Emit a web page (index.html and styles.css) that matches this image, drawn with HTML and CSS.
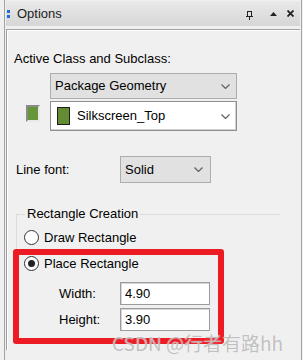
FILE: index.html
```html
<!DOCTYPE html>
<html lang="en">
<head>
    <meta charset="UTF-8">
    <title>Options</title>
    <link rel="stylesheet" href="styles.css">
</head>
<body>
    <div class="dock">
        <div class="titlebar">
            <span class="grip"><i></i><i></i></span>
            <span class="title">Options</span>
            <span class="tools">
                <svg class="pin" width="7" height="9" viewBox="0 0 7 9"><rect x="1.5" y="0.5" width="4" height="5" fill="none" stroke="#222"/><line x1="0" y1="5.5" x2="7" y2="5.5" stroke="#222"/><line x1="3.5" y1="6" x2="3.5" y2="9" stroke="#222"/></svg>
                <svg class="up" width="7" height="4" viewBox="0 0 7 4"><polygon points="0,4 3.5,0 7,4" fill="#222"/></svg>
                <svg class="close" width="7" height="7" viewBox="0 0 7 7"><path d="M0.5 0.5 L6.5 6.5 M6.5 0.5 L0.5 6.5" stroke="#222" stroke-width="1.8"/></svg>
            </span>
        </div>

        <div class="content">
            <div class="active-label">Active Class and Subclass:</div>

            <div class="class-grid">
                <span></span>
                <div class="combo flat tall">
                    <span class="combo-text">Package Geometry</span>
                    <svg class="chev" width="9" height="5" viewBox="0 0 9 5"><polyline points="0.5,0.5 4.5,4.5 8.5,0.5" fill="none" stroke="#606060" stroke-width="1.2"/></svg>
                </div>
                <span class="swatch-btn"></span>
                <div class="combo edit">
                    <span class="swatch"></span>
                    <span class="combo-text">Silkscreen_Top</span>
                    <svg class="chev" width="9" height="5" viewBox="0 0 9 5"><polyline points="0.5,0.5 4.5,4.5 8.5,0.5" fill="none" stroke="#606060" stroke-width="1.2"/></svg>
                </div>
            </div>

            <div class="font-row">
                <label>Line font:</label>
                <div class="combo flat small">
                    <span class="combo-text">Solid</span>
                    <svg class="chev" width="9" height="5" viewBox="0 0 9 5"><polyline points="0.5,0.5 4.5,4.5 8.5,0.5" fill="none" stroke="#606060" stroke-width="1.2"/></svg>
                </div>
            </div>

            <fieldset class="group">
                <legend>Rectangle Creation</legend>
                <div class="radio"><span class="dot"></span>Draw Rectangle</div>
                <div class="marked">
                    <div class="radio"><span class="dot checked"></span>Place Rectangle</div>
                    <div class="fields">
                        <label>Width:</label>
                        <div class="input">4.90</div>
                        <label>Height:</label>
                        <div class="input">3.90</div>
                    </div>
                </div>
            </fieldset>
        </div>

        <div class="watermark">CSDN @行者有路hh</div>
    </div>
</body>
</html>
```

FILE: styles.css
```css
body {
    margin: 0;
    background: #f0f0f0;
    font-family: "Liberation Sans", Arial, sans-serif;
    font-size: 13px;
    color: #000;
}
.dock {
    position: relative;
    margin-left: 4px;
    width: 298px;
    height: 360px;
    box-sizing: border-box;
    border-left: 1px solid #a3a3a3;
    border-right: 1px solid #a3a3a3;
    overflow: hidden;
}
.titlebar {
    display: flex;
    align-items: center;
    height: 25px;
    margin: 1px 1px 0;
    padding: 0 6px 0 1px;
    background: linear-gradient(#e9e9e9, #d6d6d6);
}
.grip {
    display: flex;
    flex-direction: column;
    gap: 2px;
    margin-right: 7px;
}
.grip i {
    display: block;
    width: 3px;
    height: 3px;
    background: #1d6fdc;
}
.title {
    color: #1c1c1c;
}
.tools {
    display: flex;
    align-items: center;
    margin-left: auto;
}
.pin {
    margin-right: 17px;
    margin-top: 3px;
}
.up {
    margin-right: 10px;
}
.content {
    height: 320px;
    margin: 3px 1px 0;
    border-top: 1px solid #a0a0a0;
    border-left: 1px solid #a0a0a0;
    box-shadow: inset 1px 1px 0 #fff;
}
.active-label {
    padding: 21px 0 0 7px;
    line-height: 16px;
}
.class-grid {
    display: grid;
    grid-template-columns: 43px 187px;
    row-gap: 2px;
    margin-top: 6px;
}
.combo {
    display: flex;
    align-items: center;
    box-sizing: border-box;
    padding: 0 6px 0 4px;
    line-height: 16px;
}
.combo .chev {
    margin-left: auto;
}
.flat {
    background: #e1e1e1;
    border: 1px solid #adadad;
}
.tall {
    height: 26px;
}
.edit {
    height: 30px;
    padding-left: 6px;
    background: #fff;
    border: 1px solid #8f8f8f;
    box-shadow: inset -1px -1px 0 #d0d0d0;
}
.swatch {
    width: 11px;
    height: 16px;
    margin-right: 7px;
    background: #648c32;
    border: 1px solid #1e1e1e;
}
.swatch-btn {
    align-self: start;
    width: 10px;
    height: 13px;
    margin: 4px 0 0 19px;
    background: #66953a;
    border: 2px solid;
    border-color: #8a8a8a #e8e8e8 #e8e8e8 #8a8a8a;
}
.font-row {
    display: flex;
    align-items: center;
    margin-top: 25px;
    padding-left: 9px;
}
.font-row label {
    width: 104px;
}
.small {
    width: 91px;
    height: 27px;
    padding-right: 7px;
}
.group {
    width: 264px;
    min-width: 0;
    box-sizing: border-box;
    margin: 23px 0 0 9px;
    padding: 0;
    border: 0;
    border-top: 1px solid #dcdcdc;
    border-left: 1px solid #dcdcdc;
}
.group legend {
    margin-left: 8px;
    padding: 0 2px;
    line-height: 16px;
}
.radio {
    display: flex;
    align-items: center;
    gap: 5px;
    height: 16px;
    padding-left: 7px;
    margin-top: 7px;
}
.dot {
    position: relative;
    width: 15px;
    height: 15px;
    box-sizing: border-box;
    border: 1px solid #333;
    border-radius: 50%;
    background: #fff;
}
.dot.checked::after {
    content: "";
    position: absolute;
    left: 3px;
    top: 3px;
    width: 7px;
    height: 7px;
    border-radius: 50%;
    background: #222;
}
.marked {
    width: 211px;
    box-sizing: border-box;
    margin: 4px 0 0 -4px;
    padding: 0 0 7px 5px;
    border: 6px solid #ed1c24;
    border-radius: 3px;
}
.marked .radio {
    margin-top: 0;
    padding-left: 0;
}
.fields {
    display: grid;
    grid-template-columns: 61px 90px;
    row-gap: 3px;
    align-items: center;
    margin-top: 11px;
    padding-left: 35px;
}
.input {
    height: 23px;
    box-sizing: border-box;
    padding-left: 4px;
    line-height: 21px;
    background: #fff;
    border: 1px solid #9c9c9c;
    box-shadow: inset 1px 1px 0 #d6d6d6;
}
.watermark {
    position: absolute;
    left: 107px;
    top: 331px;
    font-family: "Noto Sans CJK SC", sans-serif;
    font-size: 19px;
    line-height: 24px;
    color: rgba(140, 140, 140, 0.55);
    text-shadow: 0 0 1px #fff;
    white-space: nowrap;
}
```
